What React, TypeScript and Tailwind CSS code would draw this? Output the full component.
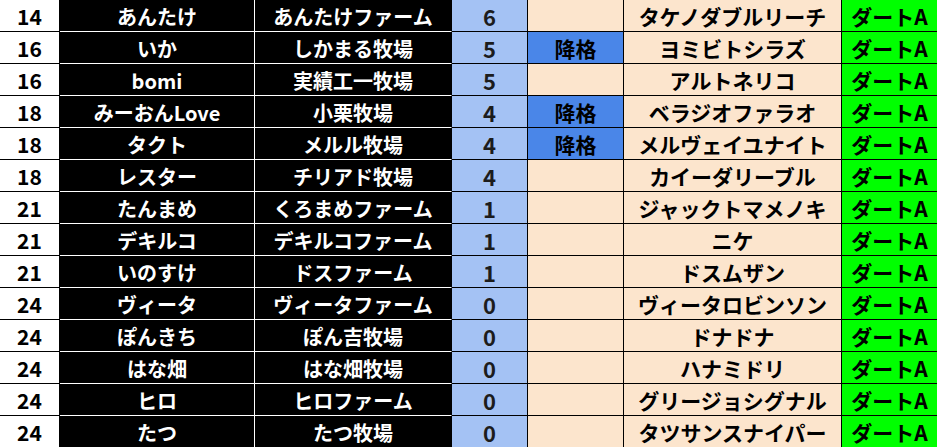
import React from "react"

interface Entry {
	rank: number
	owner: string
	farm: string
	points: number
	demoted: boolean
	horse: string
	grade: string
}

const entries: Entry[] = [
	{ rank: 14, owner: "あんたけ", farm: "あんたけファーム", points: 6, demoted: false, horse: "タケノダブルリーチ", grade: "ダートA" },
	{ rank: 16, owner: "いか", farm: "しかまる牧場", points: 5, demoted: true, horse: "ヨミビトシラズ", grade: "ダートA" },
	{ rank: 16, owner: "bomi", farm: "実績工一牧場", points: 5, demoted: false, horse: "アルトネリコ", grade: "ダートA" },
	{ rank: 18, owner: "みーおんLove", farm: "小栗牧場", points: 4, demoted: true, horse: "ベラジオファラオ", grade: "ダートA" },
	{ rank: 18, owner: "タクト", farm: "メルル牧場", points: 4, demoted: true, horse: "メルヴェイユナイト", grade: "ダートA" },
	{ rank: 18, owner: "レスター", farm: "チリアド牧場", points: 4, demoted: false, horse: "カイーダリーブル", grade: "ダートA" },
	{ rank: 21, owner: "たんまめ", farm: "くろまめファーム", points: 1, demoted: false, horse: "ジャックトマメノキ", grade: "ダートA" },
	{ rank: 21, owner: "デキルコ", farm: "デキルコファーム", points: 1, demoted: false, horse: "ニケ", grade: "ダートA" },
	{ rank: 21, owner: "いのすけ", farm: "ドスファーム", points: 1, demoted: false, horse: "ドスムザン", grade: "ダートA" },
	{ rank: 24, owner: "ヴィータ", farm: "ヴィータファーム", points: 0, demoted: false, horse: "ヴィータロビンソン", grade: "ダートA" },
	{ rank: 24, owner: "ぽんきち", farm: "ぽん吉牧場", points: 0, demoted: false, horse: "ドナドナ", grade: "ダートA" },
	{ rank: 24, owner: "はな畑", farm: "はな畑牧場", points: 0, demoted: false, horse: "ハナミドリ", grade: "ダートA" },
	{ rank: 24, owner: "ヒロ", farm: "ヒロファーム", points: 0, demoted: false, horse: "グリージョシグナル", grade: "ダートA" },
	{ rank: 24, owner: "たつ", farm: "たつ牧場", points: 0, demoted: false, horse: "タツサンスナイパー", grade: "ダートA" },
]

const cell = "flex items-center justify-center h-8 border-b border-r whitespace-nowrap"

// One line of the standings sheet
function Row({ entry }: { entry: Entry }) {
	return (
		<div className="grid grid-cols-[60px_195px_197px_76px_96px_218px_95px]">
			<div className={`${cell} pt-[2px] bg-white border-black text-black text-[21px]`}>{entry.rank}</div>
			<div className={`${cell} pt-[2px] bg-black border-white text-white text-[20px]`}>{entry.owner}</div>
			<div className={`${cell} pt-[2px] bg-black border-b-white border-r-black text-white text-[20px]`}>{entry.farm}</div>
			<div className={`${cell} bg-[#a4c2f4] border-black text-[#1c1c1c] text-[22px]`}>{entry.points}</div>
			<div className={`${cell} pt-[2px] ${entry.demoted ? "bg-[#4a86e8]" : "bg-[#fce5cd]"} border-black text-black text-[21px]`}>
				{entry.demoted ? "降格" : ""}
			</div>
			<div className={`${cell} pt-[2px] bg-[#fce5cd] border-black text-black text-[21px]`}>{entry.horse}</div>
			<div className={`${cell} pt-[2px] bg-[#00ff00] border-black text-black text-[21px] border-r-0`}>{entry.grade}</div>
		</div>
	)
}

export default function App() {
	return (
		<div className="w-[937px] h-[447px] overflow-hidden bg-white font-['Noto_Sans_CJK_JP',sans-serif] font-bold leading-none">
			{entries.map((entry, i) => (
				<Row key={i} entry={entry} />
			))}
		</div>
	)
}
